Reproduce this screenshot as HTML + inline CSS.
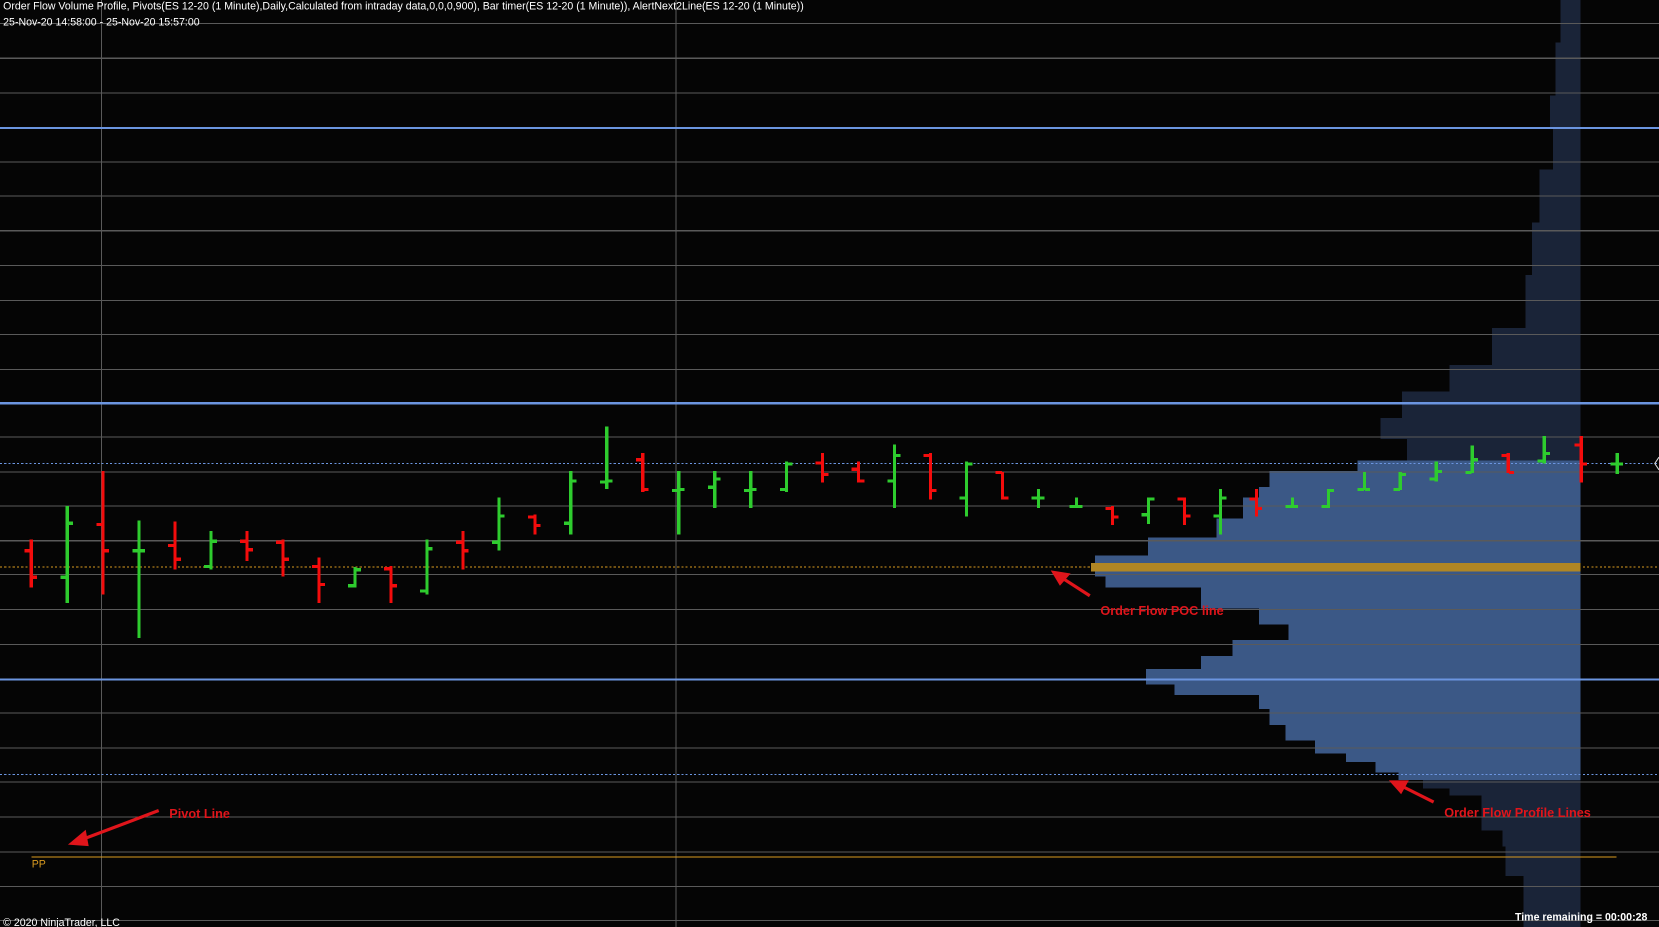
<!DOCTYPE html>
<html><head><meta charset="utf-8"><style>
html,body{margin:0;padding:0;background:#050505;overflow:hidden;width:1659px;height:927px}
svg{display:block}
text{font-family:"Liberation Sans",Arial,sans-serif}
</style></head><body>
<svg id="s" width="1659" height="927" viewBox="0 0 1568 876" xmlns="http://www.w3.org/2000/svg" shape-rendering="crispEdges">
<rect width="1568" height="876" fill="#050505"/>
<g id="dark" fill="#1a2438"></g>
<g id="light" fill="#3b5886"></g>
<g id="grid" stroke="#5a5a5a" stroke-width="1"></g>
<line x1="96" y1="0" x2="96" y2="876" stroke="#5a5a5a"/>
<line x1="639" y1="0" x2="639" y2="876" stroke="#5a5a5a"/>
<line x1="0" y1="121" x2="1568" y2="121" stroke="#6b95e0" stroke-width="2"/>
<line x1="0" y1="381" x2="1568" y2="381" stroke="#6b95e0" stroke-width="2"/>
<line x1="0" y1="642" x2="1568" y2="642" stroke="#6b95e0" stroke-width="2"/>
<line x1="0" y1="438" x2="1568" y2="438" stroke="#6b95e0" stroke-dasharray="2,2"/>
<line x1="0" y1="732" x2="1568" y2="732" stroke="#6b95e0" stroke-dasharray="2,2"/>
<line x1="0" y1="536" x2="1568" y2="536" stroke="#d99a20" stroke-dasharray="2,2"/>
<rect x="1031" y="532" width="463" height="8" fill="#b08624"/>
<line x1="30" y1="810" x2="1528" y2="810" stroke="#d99a20"/>
<g id="bars"></g>
<g stroke="#e0151b" stroke-width="3" fill="#e0151b" shape-rendering="auto">
<line x1="150" y1="766" x2="76" y2="794"/><polygon points="68,797 80,787 82,798"/>
<line x1="1030" y1="563" x2="1002" y2="545"/><polygon points="996,541 1009,543 1002,551"/>
<line x1="1355" y1="758" x2="1323" y2="742"/><polygon points="1316,739 1329,739 1324,748"/>
</g>
<g fill="#e0151b" font-size="12" font-weight="bold">
<text x="160" y="773">Pivot Line</text>
<text x="1040" y="581">Order Flow POC line</text>
<text x="1365" y="772">Order Flow Profile Lines</text>
</g>
<text x="30" y="820" fill="#d99a20" font-size="10">PP</text>
<text x="3" y="9" fill="#fff" font-size="10">Order Flow Volume Profile, Pivots(ES 12-20 (1 Minute),Daily,Calculated from intraday data,0,0,0,900), Bar timer(ES 12-20 (1 Minute)), AlertNext2Line(ES 12-20 (1 Minute))</text>
<text x="3" y="24" fill="#fff" font-size="10">25-Nov-20 14:58:00 - 25-Nov-20 15:57:00</text>
<text x="3" y="875" fill="#fff" font-size="10">© 2020 NinjaTrader, LLC</text>
<text x="1557" y="870" fill="#fff" font-size="10" font-weight="bold" text-anchor="end">Time remaining = 00:00:28</text>
<polyline points="1568,432 1564,438 1568,444" fill="none" stroke="#ddd" stroke-width="1" shape-rendering="auto"/>
</svg>
<script>
var NS="http://www.w3.org/2000/svg";
function r(g,x,y,w,h,f){var e=document.createElementNS(NS,"rect");e.setAttribute("x",x);e.setAttribute("y",y);e.setAttribute("width",w);e.setAttribute("height",h);if(f)e.setAttribute("fill",f);document.getElementById(g).appendChild(e);}
var dark=[[0,40,1475],[40,90,1470],[90,120,1465],[120,160,1468],[160,210,1455],[210,260,1448],[260,310,1442],[310,345,1410],[345,370,1370],[370,395,1325],[395,415,1305],[415,435,1330],[435,737,1330],[737,745,1345],[745,752,1370],[752,785,1400],[785,800,1420],[800,828,1423],[828,876,1440]];
dark.forEach(function(d){r("dark",d[2],d[0],1494-d[2],d[1]-d[0]);});
var light=[[435,445,1283],[445,460,1200],[460,470,1190],[470,490,1175],[490,508,1150],[508,525,1085],[525,545,1035],[545,555,1045],[555,575,1135],[575,590,1190],[590,605,1218],[605,620,1165],[620,632,1135],[632,647,1083],[647,657,1110],[657,670,1190],[670,685,1200],[685,700,1215],[700,712,1243],[712,720,1272],[720,730,1300],[730,737,1322]];
light.forEach(function(d){r("light",d[2],d[0],1494-d[2],d[1]-d[0]);});
var g=document.getElementById("grid");
[22,55,88,153,185,218,251,284,316,349,413,446,478,511,543,576,609,674,707,739,772,805,838,870].forEach(function(y){var l=document.createElementNS(NS,"line");l.setAttribute("x1",0);l.setAttribute("x2",1568);l.setAttribute("y1",y);l.setAttribute("y2",y);g.appendChild(l);});
var G="#2ecc2e",R="#f40c0c";
var b=[[29,510,555,520,545,R],[63,478,570,545,494,G],[97,445,562,495,520,R],[131,492,603,520,520,G],[165,493,538,515,528,R],[199,502,538,535,511,G],[233,502,530,511,519,R],[267,510,545,512,528,R],[301,527,570,535,552,R],[335,536,555,553,538,G],[369,535,570,537,553,R],[403,510,562,558,518,G],[437,502,538,512,520,R],[471,470,520,512,487,G],[505,486,505,488,496,R],[539,445,505,494,454,G],[573,403,462,455,454,G],[607,428,465,434,462,R],[641,445,505,463,462,G],[675,445,480,460,452,G],[709,445,480,463,462,G],[743,436,465,462,438,G],[777,428,456,437,448,R],[811,436,456,443,454,R],[845,420,480,454,430,G],[879,428,472,430,463,R],[913,436,488,470,438,G],[947,446,472,446,470,R],[981,462,480,470,470,G],[1017,470,480,478,478,G],[1051,478,496,480,488,R],[1085,470,495,486,471,G],[1119,470,496,471,487,R],[1153,462,505,487,470,G],[1187,462,488,471,480,R],[1221,470,480,478,478,G],[1255,462,480,478,463,G],[1289,446,463,462,462,G],[1323,446,463,462,448,G],[1357,436,455,452,445,G],[1391,421,447,446,434,G],[1425,428,447,430,446,R],[1459,412,438,435,428,G],[1494,412,456,420,438,R],[1528,428,448,438,438,G]];
b.forEach(function(d){var x=d[0];r("bars",x-1,d[1],3,d[2]-d[1],d[5]);r("bars",x-6,d[3]-1,6,3,d[5]);r("bars",x+1,d[4]-1,5,3,d[5]);});
</script>
</body></html>
